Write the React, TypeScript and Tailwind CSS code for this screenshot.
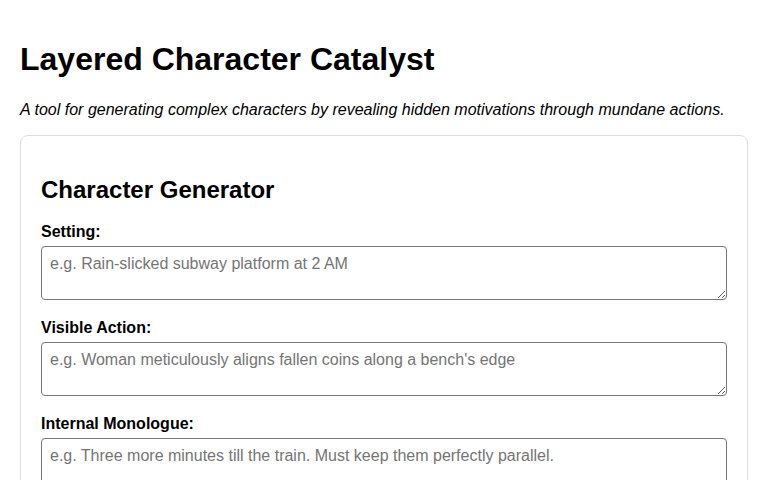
import React from "react"

const fields = [
    { id: "setting", label: "Setting:", placeholder: "e.g. Rain-slicked subway platform at 2 AM" },
    { id: "action", label: "Visible Action:", placeholder: "e.g. Woman meticulously aligns fallen coins along a bench's edge" },
    { id: "monologue", label: "Internal Monologue:", placeholder: "e.g. Three more minutes till the train. Must keep them perfectly parallel." },
    { id: "motivation", label: "Hidden Motivation:", placeholder: "e.g. She is counting down to a decision she cannot undo." },
]

export default function App() {
    return (
        <div className="min-h-screen bg-white p-5 text-black" style={{ fontFamily: '"Liberation Sans", Arial, sans-serif' }}>
            <h1 className="mt-[21px] mb-[21px] text-[32px] font-bold leading-[37px]">Layered Character Catalyst</h1>
            <p className="mb-[14px] text-base italic leading-[22px]">
                A tool for generating complex characters by revealing hidden motivations through mundane actions.
            </p>

            <div className="rounded-lg border border-[#ddd] p-5">
                <h2 className="mt-5 mb-[18px] text-2xl font-bold leading-[28px]">Character Generator</h2>
                {fields.map((f) => (
                    <div key={f.id} className="mb-[18px]">
                        <label htmlFor={f.id} className="mb-[5px] block text-base font-bold leading-[19px]">
                            {f.label}
                        </label>
                        <textarea
                            id={f.id}
                            placeholder={f.placeholder}
                            className="block h-[54px] w-full rounded border border-[#767676] px-2 py-2 text-base leading-[18px] placeholder:text-[#757575]"
                        />
                    </div>
                ))}
            </div>
        </div>
    )
}
